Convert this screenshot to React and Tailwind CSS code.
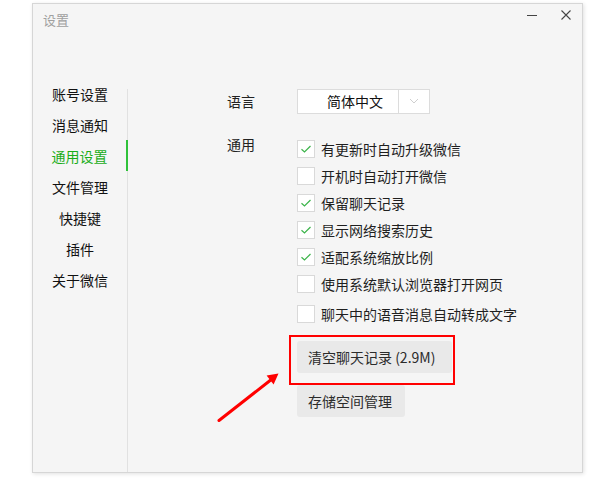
import { useState } from 'react';

const font = { fontFamily: '"Noto Sans CJK SC", "Noto Sans", sans-serif' };

const menu = ['账号设置', '消息通知', '通用设置', '文件管理', '快捷键', '插件', '关于微信'];

const options = [
  { label: '有更新时自动升级微信', on: true },
  { label: '开机时自动打开微信', on: false },
  { label: '保留聊天记录', on: true },
  { label: '显示网络搜索历史', on: true },
  { label: '适配系统缩放比例', on: true },
  { label: '使用系统默认浏览器打开网页', on: false },
];

const Checkbox = ({ checked, label, onToggle }) => (
  <div className="flex items-center h-[27px] cursor-default" onClick={onToggle}>
    <div className="w-[18px] h-[18px] bg-white border border-[#d9d9d9] flex items-center justify-center">
      {checked && (
        <svg width="12" height="10" viewBox="0 0 12 10" fill="none">
          <path d="M1.5 5.2 L4.5 8 L10.5 2" stroke="#3cb44a" strokeWidth="1.2" />
        </svg>
      )}
    </div>
    <span className="ml-[6px] text-[14px] leading-[16px] text-[#1f1f1f]">{label}</span>
  </div>
);

const GrayButton = ({ children, className }) => (
  <button className={`h-[32px] px-[11px] bg-[#e9e9e9] rounded-[3px] text-[14px] leading-[16px] text-[#2b2b2b] text-left whitespace-nowrap ${className}`}>
    {children}
  </button>
);

export default function App() {
  const [active, setActive] = useState(2);
  const [checks, setChecks] = useState(options.map((o) => o.on));
  const [voice, setVoice] = useState(false);

  return (
    <div className="relative w-[600px] h-[479px] bg-white overflow-hidden" style={font}>
      <div className="ml-[32px] mt-[3px] w-[551px] h-[470px] bg-[#f5f5f5] border border-[#d6d6d6] shadow-[1px_1px_4px_rgba(0,0,0,0.12)] flex flex-col">
        {/* title bar */}
        <div className="h-[30px] flex items-center justify-between pl-[10px] pr-[11px]">
          <span className="text-[13px] leading-none text-[#a0a0a0]">设置</span>
          <div className="flex items-center gap-[24px] -mt-[8px]">
            <svg width="10" height="10" viewBox="0 0 10 10">
              <path d="M0 5.5 H10" stroke="#444" strokeWidth="1" />
            </svg>
            <svg width="10" height="10" viewBox="0 0 10 10">
              <path d="M0.5 0.5 L9.5 9.5 M9.5 0.5 L0.5 9.5" stroke="#444" strokeWidth="1.1" />
            </svg>
          </div>
        </div>

        <div className="flex flex-1">
          {/* sidebar */}
          <div className="w-[95px] mt-[55px] border-r border-[#e1e1e1]">
            <div className="-mt-[11px] flex flex-col">
              {menu.map((item, i) => (
                <div
                  key={item}
                  onClick={() => setActive(i)}
                  className={
                    i === active
                      ? 'h-[31px] -mr-px border-r-2 border-[#2fc23a] flex items-center justify-center text-[14px] leading-[16px] text-[#1aad19] cursor-default'
                      : 'h-[31px] flex items-center justify-center text-[14px] leading-[16px] text-[#111] cursor-default'
                  }
                >
                  {item}
                </div>
              ))}
            </div>
          </div>

          {/* settings content */}
          <div className="flex-1 pl-[99px] pt-[55px]">
            <div className="flex items-center h-[24px]">
              <span className="w-[70px] text-[14px] leading-[16px] text-[#222]">语言</span>
              <div className="flex h-[25px] bg-white border border-[#dcdcdc]">
                <div className="w-[101px] flex items-center pl-[29px] text-[14px] leading-[16px] text-[#111] border-r border-[#dcdcdc]">
                  简体中文
                </div>
                <div className="w-[30px] flex items-center justify-center">
                  <svg width="10" height="6" viewBox="0 0 10 6" fill="none">
                    <path d="M1 1 L5 5 L9 1" stroke="#cfcfcf" strokeWidth="1" />
                  </svg>
                </div>
              </div>
            </div>

            <div className="flex items-start mt-[22px]">
              <span className="w-[70px] mt-[1px] text-[14px] leading-[16px] text-[#222]">通用</span>
              <div className="flex flex-col">
                {options.map((o, i) => (
                  <Checkbox
                    key={o.label}
                    label={o.label}
                    checked={checks[i]}
                    onToggle={() => setChecks(checks.map((c, j) => (j === i ? !c : c)))}
                  />
                ))}
                <div className="mt-[3px]">
                  <Checkbox label="聊天中的语音消息自动转成文字" checked={voice} onToggle={() => setVoice(!voice)} />
                </div>
                <div className="mt-[14px] flex flex-col items-start gap-[12px]">
                  <GrayButton className="w-[155px]">清空聊天记录 (2.9M)</GrayButton>
                  <GrayButton className="w-[108px]">存储空间管理</GrayButton>
                </div>
              </div>
            </div>
          </div>
        </div>
      </div>

      {/* red annotation box and arrow */}
      <div className="absolute left-[289px] top-[335px] w-[166px] h-[50px] border-2 border-[#ff0000] pointer-events-none" />
      <svg className="absolute left-0 top-0 pointer-events-none" width="600" height="479" viewBox="0 0 600 479">
        <path d="M219 420.5 L272 379" stroke="#ff0000" strokeWidth="3" strokeLinecap="round" />
        <path d="M278.5 373.5 L273.6 384.6 L266.6 375.6 Z" fill="#ff0000" />
      </svg>
    </div>
  );
}
